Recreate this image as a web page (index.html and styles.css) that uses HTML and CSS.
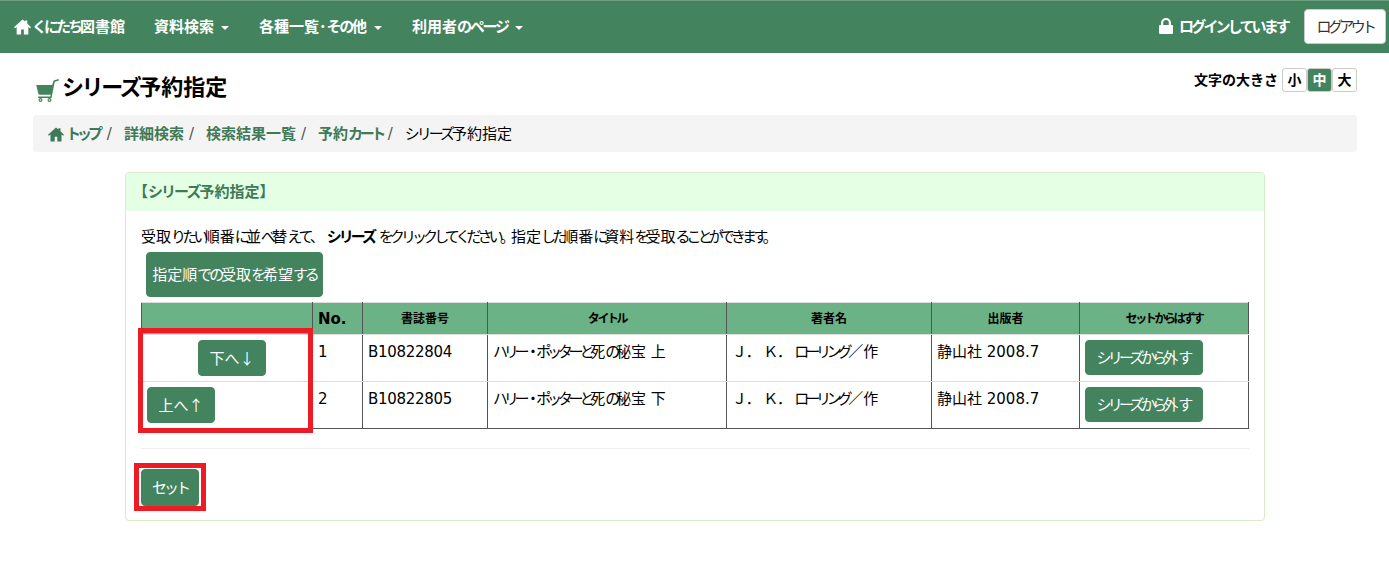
FILE: index.html
```html
<!DOCTYPE html>
<html lang="ja">
<head>
<meta charset="utf-8">
<title>シリーズ予約指定</title>
<link rel="stylesheet" href="styles.css">
</head>
<body>
<svg class="defs" width="0" height="0" aria-hidden="true">
  <symbol id="home" viewBox="0 0 16 14"><path d="M8 0 0 7.200l.9 1L2.500 6.900V14h4.200V9.300h2.600V14h4.200V6.900l1.600 1.300.9-1L12.500 3.700V.8h-2v1.100z"/></symbol>
</svg>
<nav class="navbar">
  <a class="brand"><svg class="home-icon"><use href="#home"/></svg><span><span class="n">くにたち</span>図書館</span></a>
  <a class="nav-item">資料検索<i class="caret"></i></a>
  <a class="nav-item">各種一覧･<span class="n">その</span>他<i class="caret"></i></a>
  <a class="nav-item">利用者<span class="n">のページ</span><i class="caret"></i></a>
  <div class="nav-right">
    <svg class="lock-icon" viewBox="0 0 14 16"><path d="M2 7V4.800a5 4.800 0 0 1 10 0V7h1a1 1 0 0 1 1 1v7a1 1 0 0 1-1 1H1a1 1 0 0 1-1-1V8a1 1 0 0 1 1-1zm2.200 0h5.600V4.800a2.800 2.700 0 0 0-5.600 0z"/></svg>
    <span class="login-text"><span class="n">ログインしています</span></span>
    <button class="logout"><span class="n">ログアウト</span></button>
  </div>
</nav>
<main class="page">
  <div class="title-row">
    <h1 class="title">
      <svg class="cart-icon" viewBox="0 0 24 24"><path d="M23.500 1 18.600 2.600 17.200 7H1.200L3.300 15.500C3.500 16.300 4 16.700 4.800 16.700H15.800L15.300 18.400H3.200V20H16.500L19.800 3.800 24 2.500z"/><circle cx="5.500" cy="22" r="2"/><circle cx="14.500" cy="22" r="2"/><circle cx="5.500" cy="22" r=".8" fill="#fff"/><circle cx="14.500" cy="22" r=".8" fill="#fff"/></svg>
      <span><span class="n">シリーズ</span>予約指定</span>
    </h1>
    <div class="font-size">
      <span class="font-size-label">文字の大きさ</span>
      <span class="fs-btn">小</span><span class="fs-btn active">中</span><span class="fs-btn">大</span>
    </div>
  </div>
  <ol class="breadcrumb">
    <li class="crumb crumb-top"><a class="crumb-link"><svg class="crumb-home"><use href="#home"/></svg><span class="n">トップ</span></a><span class="sep">/</span></li>
    <li class="crumb"><a class="crumb-link">詳細検索</a><span class="sep">/</span></li>
    <li class="crumb"><a class="crumb-link">検索結果一覧</a><span class="sep">/</span></li>
    <li class="crumb"><a class="crumb-link">予約<span class="n">カート</span></a><span class="sep">/</span></li>
    <li class="crumb current"><span class="n">シリーズ</span>予約指定</li>
  </ol>
  <section class="panel">
    <div class="panel-heading">【<span class="n">シリーズ</span>予約指定】</div>
    <div class="panel-body">
      <p class="lead">受取<span class="n">りたい</span>順番<span class="n">に</span>並<span class="n">べ</span>替<span class="n h">えて、</span> <b class="lead-b"><span class="n">シリーズ</span></b> <span class="n t">をクリックしてください。</span>指定<span class="n t">した</span>順番<span class="n t">に</span>資料<span class="n t">を</span>受取<span class="n t">ることができます。</span></p>
      <button class="btn btn-wish">指定順<span class="n">での</span>受取<span class="n">を</span>希望<span class="n">する</span></button>
      <table class="series">
        <colgroup><col class="c1"><col class="c2"><col class="c3"><col class="c4"><col class="c5"><col class="c6"><col class="c7"></colgroup>
        <thead>
          <tr><th></th><th class="th-no">No.</th><th>書誌番号</th><th><span class="n">タイトル</span></th><th>著者名</th><th>出版者</th><th><span class="n">セットからはずす</span></th></tr>
        </thead>
        <tbody>
          <tr>
            <td class="move center"><button class="btn btn-move">下へ↓</button></td>
            <td>1</td><td class="code">B10822804</td><td class="kana"><span class="n">ハリー・ポッターと</span>死<span class="n">の</span>秘宝 上</td><td class="kana"><span class="w">Ｊ． Ｋ． </span><span class="n">ローリング</span>／作</td><td>静山社 2008.7</td>
            <td><button class="btn btn-remove"><span class="n">シリーズから</span>外<span class="n">す</span></button></td>
          </tr>
          <tr>
            <td class="move"><button class="btn btn-move">上へ↑</button></td>
            <td>2</td><td class="code">B10822805</td><td class="kana"><span class="n">ハリー・ポッターと</span>死<span class="n">の</span>秘宝 下</td><td class="kana"><span class="w">Ｊ． Ｋ． </span><span class="n">ローリング</span>／作</td><td>静山社 2008.7</td>
            <td><button class="btn btn-remove"><span class="n">シリーズから</span>外<span class="n">す</span></button></td>
          </tr>
        </tbody>
      </table>
      <hr class="rule">
      <button class="btn btn-set"><span class="n">セット</span></button>
    </div>
  </section>
</main>
<div class="mark mark-move"></div>
<div class="mark mark-set"></div>
</body>
</html>
```
FILE: styles.css
```css
* { box-sizing: border-box; }
html, body { margin: 0; padding: 0; }
body {
  position: relative;
  height: 576px;
  overflow: hidden;
  background: #fff;
  color: #000;
  font-family: "DejaVu Sans", "Noto Sans CJK JP", sans-serif;
  font-size: 15px;
  line-height: 20px;
}
.n { letter-spacing: -.2em; }
.defs { position: absolute; }
.navbar {
  height: 53px;
  display: flex;
  align-items: center;
  background: #43845e;
  border-top: 1px solid #6f9f83;
  color: #fff;
  font-weight: 700;
  padding-left: 14px;
}
.brand { display: flex; align-items: center; margin-right: 29px; }
.home-icon { width: 17px; height: 16px; fill: #fff; margin-right: 1px; }
.nav-item { display: flex; align-items: center; margin-right: 30px; }
.nav-item .n { letter-spacing: -.15em; }
.caret {
  width: 0; height: 0; margin-left: 7px; margin-top: 2px;
  border-top: 4px solid #fff; border-left: 4px solid transparent; border-right: 4px solid transparent;
}
.nav-right { margin-left: auto; display: flex; align-items: center; padding-right: 3px; }
.lock-icon { width: 14px; height: 16px; fill: #fff; margin-right: 6px; margin-top: -2px; }
.login-text { margin-right: 16px; }
.login-text .n { letter-spacing: -.19em; }
.logout {
  width: 82px; height: 35px; padding: 0; margin-top: -1px;
  background: #fff; border: 1px solid #ccc; border-radius: 4px;
  font: inherit; font-weight: 400; color: #333;
}
.logout .n { letter-spacing: -.24em; }
.page { padding: 0 32px 0 33px; }
.title-row { display: flex; justify-content: space-between; height: 62px; }
.title {
  margin: 20px 0 0 2px; display: flex; align-items: center; height: 30px;
  font-size: 22px; font-weight: 700;
}
.title .n { letter-spacing: -.11em; }
.cart-icon { width: 24px; height: 24px; fill: #43845e; margin-right: 3px; margin-top: 4px; }
.font-size { display: flex; align-items: center; height: 24px; margin-top: 15px; }
.font-size-label { font-size: 14px; font-weight: 700; margin-right: 4px; }
.fs-btn {
  width: 25px; height: 24px; display: flex; align-items: center; justify-content: center;
  border: 1px solid #ccc; border-radius: 3px; font-weight: 700; font-size: 14px;
  background: #fff;
}
.fs-btn.active { background: #43845e; color: #fff; }
.breadcrumb {
  list-style: none; margin: 0; padding: 1px 15px 0; height: 37px;
  display: flex; align-items: center; background: #f4f4f4; border-radius: 4px;
}
.crumb { display: flex; align-items: center; }
.crumb-link { display: flex; align-items: center; color: #3f7a58; font-weight: 700; }
.crumb-link .n { letter-spacing: -.23em; }
.crumb-top .crumb-link .n { letter-spacing: -.27em; }
.crumb-top .sep { margin-left: 8px; }
.crumb-home { width: 16px; height: 15px; fill: #3f7a58; margin-right: 2px; }
.sep { margin: 0 12px 0 5px; color: #555; }
.current .n { letter-spacing: -.2em; }
.panel {
  margin: 20px 92px 0; height: 349px;
  border: 1px solid #d5eec5; border-radius: 4px;
}
.panel-heading {
  height: 38px; padding: 9px 7px; background: #e5ffe5; color: #3f7a58;
  font-weight: 700; font-size: 15px;
  border-radius: 3px 3px 0 0;
}
.panel-heading .n { letter-spacing: -.13em; }
.panel-body { padding: 16px 15px; }
.lead { margin: 0; height: 25px; white-space: nowrap; }
.lead .n { letter-spacing: -.25em; }
.lead .h { letter-spacing: -.2em; }
.lead .t { letter-spacing: -.26em; }
.lead-b .n { letter-spacing: -.2em; }
.btn {
  display: block; border: 1px solid #43845e; background: #43845e; color: #fff;
  border-radius: 4px; font: inherit; padding: 0;
}
.btn-wish { width: 177px; height: 45px; margin-left: 5px; }
.btn-wish .n { letter-spacing: -.21em; }
.series { table-layout: fixed; width: 1107px; margin-top: 5px; border-collapse: collapse; }
.c1 { width: 171px; } .c2 { width: 50px; } .c3 { width: 125px; } .c4 { width: 239px; }
.c5 { width: 205px; } .c6 { width: 148px; } .c7 { width: 169px; }
.series th {
  height: 32px; padding: 0; background: #6cb287; font-size: 12px; font-weight: 700; text-align: center;
  border-left: 1px solid #555; border-right: 1px solid #555; border-top: 1px solid #ddd; border-bottom: 1px solid #ddd;
}
.series .th-no { font-size: 15px; text-align: left; padding-left: 5px; }
.series td {
  height: 47px; padding: 7px 5px 3px; vertical-align: top; white-space: nowrap;
  border-left: 1px solid #555; border-right: 1px solid #555; border-bottom: 1px solid #ddd;
}
.series .move, .series td:last-child { padding-top: 5px; padding-bottom: 5px; }
.series tbody tr:last-child td { border-bottom: 1px solid #555; }
.series .code { letter-spacing: -.3px; }
.series .kana .n { letter-spacing: -.28em; }
.series .kana .w { letter-spacing: -.08em; }
.center .btn { margin-left: 51px; }
.btn-move { width: 68px; height: 36px; font-family: "Noto Sans CJK JP", sans-serif; font-size: 15px; }
.btn-remove { width: 118px; height: 35px; padding-right: 2px; }
.btn-remove .n { letter-spacing: -.25em; }
.rule { margin: 19px 0 0; border: 0; border-top: 1px solid #eee; }
.btn-set { width: 58px; height: 37px; margin-top: 20px; }
.mark { position: absolute; border: 5px solid #ed1c24; }
.mark-move { left: 138px; top: 328px; width: 175px; height: 105px; }
.mark-set { left: 134px; top: 463px; width: 72px; height: 48px; }
```
